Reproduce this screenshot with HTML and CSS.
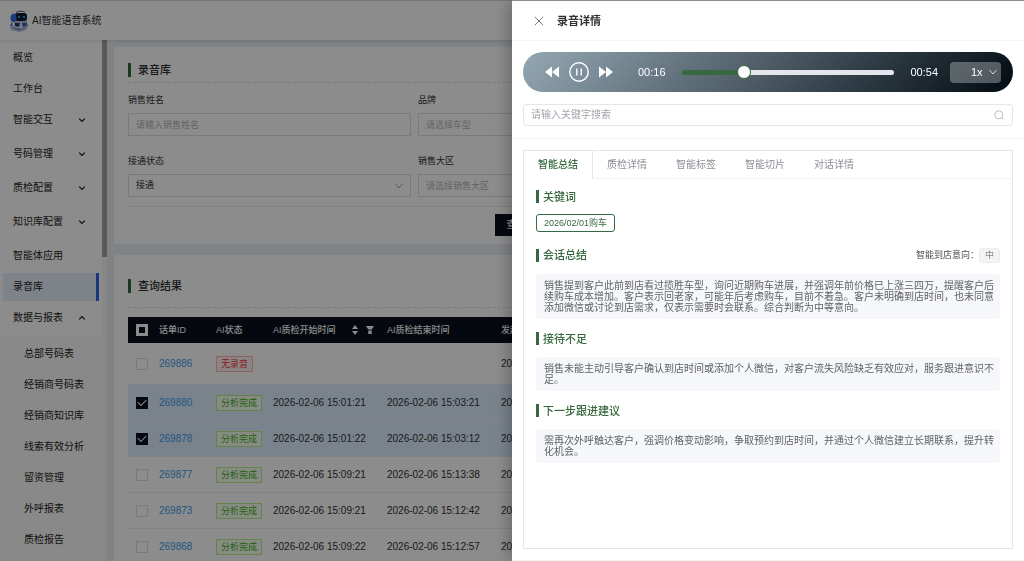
FILE: index.html
```html
<!DOCTYPE html>
<html lang="zh-CN">
<head>
<meta charset="utf-8">
<meta name="viewport" content="width=device-width, initial-scale=1">
<title>AI智能语音系统</title>
<link rel="stylesheet" href="styles.css">
</head>
<body>
<svg class="sprite" aria-hidden="true">
  <symbol id="down" viewBox="0 0 8 8"><path d="M1.2 2.6 4 5.4 6.8 2.6" fill="none" stroke="currentColor" stroke-width="1.3"/></symbol>
  <symbol id="up" viewBox="0 0 8 8"><path d="M1.2 5.4 4 2.6 6.8 5.4" fill="none" stroke="currentColor" stroke-width="1.3"/></symbol>
  <symbol id="thin-down" viewBox="0 0 10 10"><path d="M1.5 3 5 7 8.5 3" fill="none" stroke="currentColor" stroke-width="1"/></symbol>
</svg>
<div class="app">
  <header class="topbar">
    <svg class="logo" viewBox="0 0 20 22" aria-hidden="true">
      <path d="M1 16 10 13l9 3-2 4-7 2-8-2z" fill="#b9c2da"/>
      <path d="M3 17.5 10 15.5l7 2-7 3z" fill="#6d7ba8"/>
      <path d="M5 11h10l2 6-6 2-7-2z" fill="#cfd8ee"/>
      <path d="M6 12h5l-1 5-4-1z" fill="#26365e"/>
      <path d="M13 12h3l1 4-3 1z" fill="#3a4f8a"/>
      <rect x="2" y="3" width="16" height="10" rx="4" fill="#b7c4e2"/>
      <rect x="6" y="3" width="12" height="8" rx="3" fill="#101a30"/>
      <ellipse cx="4.500" cy="8" rx="3" ry="4" fill="#2f6fe0"/>
      <path d="M9 7h2M14 7h2" stroke="#5ac8ff" stroke-width="1.4"/>
      <path d="M7 2.5 11 1l5 1" stroke="#4b5876" fill="none"/>
      <path d="M17 12l1 4M3 13l-1 3" stroke="#3563c4" stroke-width="1.5"/>
    </svg>
    <span class="brand">AI智能语音系统</span>
  </header>
  <div class="shell">
    <nav class="sidebar" aria-label="主菜单">
      <div class="menu">
        <a class="item" href="#">概览</a>
        <a class="item" href="#">工作台</a>
        <a class="item parent" href="#">智能交互<svg class="caret"><use href="#down"/></svg></a>
        <a class="item parent" href="#">号码管理<svg class="caret"><use href="#down"/></svg></a>
        <a class="item parent" href="#">质检配置<svg class="caret"><use href="#down"/></svg></a>
        <a class="item parent" href="#">知识库配置<svg class="caret"><use href="#down"/></svg></a>
        <a class="item" href="#">智能体应用</a>
        <a class="item current" href="#" aria-current="page">录音库</a>
        <a class="item parent open" href="#">数据与报表<svg class="caret"><use href="#up"/></svg></a>
        <div class="submenu">
          <a class="item" href="#">总部号码表</a>
          <a class="item" href="#">经销商号码表</a>
          <a class="item" href="#">经销商知识库</a>
          <a class="item" href="#">线索有效分析</a>
          <a class="item" href="#">留资管理</a>
          <a class="item" href="#">外呼报表</a>
          <a class="item" href="#">质检报告</a>
        </div>
      </div>
      <div class="scrollbar"><div class="thumb"></div></div>
    </nav>
    <main class="content">
      <section class="card filter-card">
        <h2 class="card-title">录音库</h2>
        <form class="filters">
          <div class="field"><label for="f1">销售姓名</label><input class="control" id="f1" type="text" placeholder="请输入销售姓名"></div>
          <div class="field"><label for="f2">品牌</label><input class="control" id="f2" type="text" placeholder="请选择车型"></div>
          <div class="field"></div>
          <div class="field"><label for="f3">接通状态</label>
            <div class="picker"><select class="control" id="f3"><option>接通</option></select><svg class="picker-icon"><use href="#thin-down"/></svg></div></div>
          <div class="field"><label for="f4">销售大区</label><input class="control" id="f4" type="text" placeholder="请选择销售大区"></div>
        </form>
        <div class="actions"><button class="primary" type="button">查询</button></div>
      </section>
      <section class="card result-card">
        <h2 class="card-title">查询结果</h2>
        <table class="records">
          <colgroup><col class="c-check"><col class="c-id"><col class="c-id"><col class="c-date"><col class="c-date"><col></colgroup>
          <thead><tr>
            <th><input class="check partial" type="checkbox" aria-label="全选"></th>
            <th>话单ID</th><th>AI状态</th>
            <th><div class="head-tools"><span>AI质检开始时间</span>
              <svg class="sort" viewBox="0 0 6 10"><path d="M0 4 3 0l3 4zM0 6h6L3 10z" fill="currentColor"/></svg>
              <svg class="funnel" viewBox="0 0 8 8"><path d="M0 0h8L5.7 3.6H2.3zM2.3 4.6h3.4V8H2.3z" fill="currentColor"/></svg></div></th>
            <th>AI质检结束时间</th><th>发起</th>
          </tr></thead>
          <tbody>
            <tr class="first"><td><input class="check" type="checkbox" aria-label="选择269886"></td><td><a href="#">269886</a></td><td><span class="tag bad">无录音</span></td><td></td><td></td><td>2026</td></tr>
            <tr class="picked"><td><input class="check" type="checkbox" checked aria-label="选择269880"></td><td><a href="#">269880</a></td><td><span class="tag good">分析完成</span></td><td>2026-02-06 15:01:21</td><td>2026-02-06 15:03:21</td><td>2026</td></tr>
            <tr class="picked"><td><input class="check" type="checkbox" checked aria-label="选择269878"></td><td><a href="#">269878</a></td><td><span class="tag good">分析完成</span></td><td>2026-02-06 15:01:22</td><td>2026-02-06 15:03:12</td><td>2026</td></tr>
            <tr><td><input class="check" type="checkbox" aria-label="选择269877"></td><td><a href="#">269877</a></td><td><span class="tag good">分析完成</span></td><td>2026-02-06 15:09:21</td><td>2026-02-06 15:13:38</td><td>2026</td></tr>
            <tr><td><input class="check" type="checkbox" aria-label="选择269873"></td><td><a href="#">269873</a></td><td><span class="tag good">分析完成</span></td><td>2026-02-06 15:09:21</td><td>2026-02-06 15:12:42</td><td>2026</td></tr>
            <tr><td><input class="check" type="checkbox" aria-label="选择269868"></td><td><a href="#">269868</a></td><td><span class="tag good">分析完成</span></td><td>2026-02-06 15:09:22</td><td>2026-02-06 15:12:57</td><td>2026</td></tr>
          </tbody>
        </table>
      </section>
    </main>
  </div>
</div>
<div class="mask"></div>
<aside class="drawer" role="dialog" aria-labelledby="drawer-title">
  <header class="drawer-head">
    <button class="close" type="button" aria-label="关闭"><svg viewBox="0 0 10 10"><path d="M.8.8l8.4 8.4M9.2.8.8 9.2" fill="none" stroke="currentColor" stroke-width="1"/></svg></button>
    <h2 id="drawer-title">录音详情</h2>
  </header>
  <div class="drawer-top">
    <div class="player">
      <div class="transport">
        <button type="button" aria-label="后退"><svg class="skip" viewBox="0 0 14 12"><path d="M7 .5v11L0 6zM14 .5v11L7 6z" fill="currentColor"/></svg></button>
        <button type="button" aria-label="暂停"><svg class="pause" viewBox="0 0 20 20"><circle cx="10" cy="10" r="9.2" fill="none" stroke="currentColor" stroke-width="1.4"/><path d="M7.8 6.5v7M12.2 6.5v7" stroke="currentColor" stroke-width="1.4"/></svg></button>
        <button type="button" aria-label="前进"><svg class="skip" viewBox="0 0 14 12"><path d="M0 .5v11L7 6zM7 .5v11L14 6z" fill="currentColor"/></svg></button>
      </div>
      <span class="time">00:16</span>
      <input class="seek" type="range" min="0" max="54" value="15" aria-label="播放进度">
      <span class="time">00:54</span>
      <div class="speed"><select aria-label="播放速度"><option>1x</option></select><svg class="speed-icon"><use href="#thin-down"/></svg></div>
    </div>
    <div class="search">
      <input type="text" placeholder="请输入关键字搜索" aria-label="关键字搜索">
      <svg class="search-icon" viewBox="0 0 10 10"><circle cx="4.800" cy="4.800" r="4" fill="none" stroke="currentColor" stroke-width=".9"/><path d="M7.600 7.600 9.400 9.400" stroke="currentColor" stroke-width=".9"/></svg>
    </div>
  </div>
  <div class="drawer-body">
    <div class="tabs-card">
      <div class="tabs" role="tablist">
        <button class="tab active" role="tab" aria-selected="true" type="button">智能总结</button>
        <button class="tab" role="tab" type="button">质检详情</button>
        <button class="tab" role="tab" type="button">智能标签</button>
        <button class="tab" role="tab" type="button">智能切片</button>
        <button class="tab" role="tab" type="button">对话详情</button>
      </div>
      <div class="panel" role="tabpanel">
        <section class="block keywords"><h3>关键词</h3><span class="keyword">2026/02/01购车</span></section>
        <section class="block">
          <div class="block-head"><h3>会话总结</h3><div class="intent"><span>智能到店意向：</span><span class="level">中</span></div></div>
          <p>销售提到客户此前到店看过揽胜车型，询问近期购车进展，并强调年前价格已上涨三四万，提醒客户后续购车成本增加。客户表示回老家，可能年后考虑购车，目前不着急。客户未明确到店时间，也未同意添加微信或讨论到店需求，仅表示需要时会联系。综合判断为中等意向。</p>
        </section>
        <section class="block"><h3>接待不足</h3><p>销售未能主动引导客户确认到店时间或添加个人微信，对客户流失风险缺乏有效应对，服务跟进意识不足。</p></section>
        <section class="block"><h3>下一步跟进建议</h3><p>需再次外呼触达客户，强调价格变动影响，争取预约到店时间，并通过个人微信建立长期联系，提升转化机会。</p></section>
      </div>
    </div>
  </div>
</aside>
</body>
</html>
```
FILE: styles.css
```css
* { box-sizing: border-box; }
html, body { height: 100%; }
body {
  margin: 0;
  overflow: hidden;
  font: 10px/12px "Liberation Sans", "Noto Sans CJK SC", sans-serif;
  color: #303133;
}
h2, h3, p { margin: 0; }
a { color: inherit; text-decoration: none; }
button, input, select { font: inherit; color: inherit; margin: 0; }
button { border: 0; padding: 0; background: none; }
svg { display: block; flex: none; }
.sprite { position: absolute; width: 0; height: 0; }

.app { display: flex; flex-direction: column; height: 100vh; border-top: 1px solid #dcdcdc; background: #eaeef4; isolation: isolate; }
.topbar {
  display: flex; align-items: center; gap: 3px; flex: none;
  height: 39px; padding-left: 9px; background: #fff;
  box-shadow: 0 1px 4px rgba(0, 21, 41, .14); z-index: 1;
}
.logo { width: 20px; height: 22px; }
.brand { color: #303133; }
.shell { display: flex; flex: 1; min-height: 0; }

.sidebar { display: flex; flex: none; width: 107px; background: #fff; overflow: hidden; }
.menu { flex: 1; padding-top: 4px; }
.item { display: flex; align-items: center; justify-content: space-between; height: 28px; margin: 0 3px 3px; padding: 0 13px 0 10px; color: #1d1e20; white-space: nowrap; }
.parent { margin-bottom: 6px; }
.open { margin-bottom: 4px; }
.caret { width: 8px; height: 8px; }
.current { background: #e6effc; border-right: 3px solid #2f66e0; }
.submenu { padding: 4px 0 30px; background: #fafafa; }
.submenu .item { padding-left: 21px; padding-right: 0; }
.scrollbar { width: 5px; background: #f7f7f7; }
.thumb { height: 217px; background: #a2a2a2; }

.content { flex: 1; min-width: 0; padding: 7px 19px 0 7px; overflow: hidden; }
.card { background: #fff; border-radius: 4px; padding: 16px 14px 8px; }
.card + .card { margin-top: 11px; }
.card-title { display: flex; align-items: center; gap: 7px; padding-bottom: 5px; border-bottom: 1px dashed #e2e2e2; font-size: 11px; line-height: 14px; font-weight: 500; }
.card-title::before { content: ""; width: 3px; height: 14px; background: #2d6a3a; }
.filters { display: grid; grid-template-columns: repeat(3, 1fr); gap: 20px 7px; padding: 12px 0 9px; }
.field { display: flex; flex-direction: column; gap: 7px; font-size: 9px; line-height: 11px; }
.control { width: 100%; height: 23px; padding: 0 7px; border: 1px solid #dcdfe6; border-radius: 0; background: #fff; outline: 0; appearance: none; }
.control::placeholder { color: #b4b7bd; opacity: 1; }
.picker { display: grid; align-items: center; }
.picker > * { grid-area: 1 / 1; }
.picker-icon { justify-self: end; width: 10px; height: 10px; margin-right: 7px; color: #a0a3a9; pointer-events: none; }
.actions { display: flex; justify-content: center; padding: 7px 70px 0 0; border-top: 1px solid #ebebeb; }
.primary { height: 22px; padding: 0 11px; min-width: 60px; text-align: left; border: 1px solid #0a121d; background: #0a121d; color: #fff; font-weight: 500; }
.result-card { height: 400px; padding-top: 24px; }
.result-card .card-title { padding-bottom: 14px; margin-bottom: 9px; }

.records { width: 100%; table-layout: fixed; border-collapse: separate; border-spacing: 0; }
.c-check { width: 25px; }
.c-id { width: 57px; }
.c-date { width: 114px; }
.records th { height: 26px; padding: 0 6px; background: #0a121d; color: #fff; font-size: 9px; font-weight: 500; text-align: left; white-space: nowrap; }
.records td { height: 36px; padding: 0 6px; border-bottom: 1px solid #ebeef5; white-space: nowrap; }
.records .first td { height: 42px; }
.records th:first-child, .records td:first-child { padding: 0 0 0 8px; }
.records a { color: #3a9cec; }
.picked td { background: #dfefff; }
.head-tools { display: flex; align-items: center; gap: 8px; }
.head-tools span { margin-right: 8px; }
.sort { width: 6px; height: 10px; }
.funnel { width: 8px; height: 8px; }
.check { display: grid; place-items: center; appearance: none; width: 12px; height: 12px; border: 1px solid #dcdfe6; background: #fff; }
.check:checked { border-color: #0a121d; background: #0a121d; }
.check:checked::before { content: ""; width: 7px; height: 4px; margin-bottom: 2px; border: solid #fff; border-width: 0 0 1px 1px; transform: rotate(-45deg); }
.partial { background: #0a121d; border: 3px solid #fff; }
.tag { display: inline-block; padding: 0 4px; border: 1px solid; font-size: 9px; line-height: 14px; }
.good { color: #42b01f; border-color: #b7eb8f; background: #f6ffed; }
.bad { color: #f5323c; border-color: #ffb3ae; background: #fff1f0; }

.mask { position: fixed; inset: 0; background: rgba(0, 0, 0, .45); }

.drawer { position: fixed; inset: 1px 0 0 auto; width: 50%; display: flex; flex-direction: column; background: #fff; border-bottom: 1px solid #f0f0f0; box-shadow: 0 -1px 0 #8c8c8c, -4px 0 14px rgba(0, 0, 0, .25); }
.drawer-head { display: flex; align-items: center; gap: 13px; height: 40px; flex: none; padding-left: 22px; border-bottom: 1px solid #f4f4f5; }
.drawer-head h2 { font-size: 11px; line-height: 14px; font-weight: 700; color: #303133; }
.close { color: #77797d; }
.close svg { width: 10px; height: 10px; }
.drawer-top { display: flex; flex-direction: column; gap: 12px; padding: 11px 11px 12px; border-bottom: 1px solid #f2f2f4; }
.player { display: flex; align-items: center; height: 40px; padding: 0 12px 0 22px; gap: 16px; border-radius: 20px; color: #fff; background: linear-gradient(135deg, #94a8b4, #010a11); }
.transport { display: flex; align-items: center; gap: 10px; margin-right: 9px; }
.transport button { color: #fff; }
.skip { width: 14px; height: 12px; }
.pause { width: 20px; height: 20px; }
.time { font-size: 11px; }
.seek { flex: 1; min-width: 0; height: 14px; appearance: none; background: none; }
.seek::-webkit-slider-runnable-track { height: 5px; border-radius: 3px; background: linear-gradient(to right, #37683f 30%, #e4e5ed 30%); }
.seek::-webkit-slider-thumb { appearance: none; width: 14px; height: 14px; margin-top: -5px; border: 1px solid #37683f; border-radius: 50%; background: #fff; }
.speed { display: grid; align-items: center; width: 51px; height: 21px; margin-left: -4px; border-radius: 4px; background: rgba(255, 255, 255, .3); }
.speed > * { grid-area: 1 / 1; }
.speed select { width: 100%; height: 21px; padding: 0 0 0 21px; border: 0; background: none; appearance: none; font-size: 11px; color: #fff; }
.speed-icon { justify-self: end; width: 10px; height: 10px; margin-right: 3px; pointer-events: none; color: #d5d8da; }
.search { display: flex; align-items: center; height: 22px; padding: 0 8px 0 7px; border: 1px solid #e4e6ec; border-radius: 3px; }
.search input { flex: 1; min-width: 0; padding: 0; border: 0; outline: 0; background: none; }
.search input::placeholder { color: #a2a4aa; opacity: 1; }
.search-icon { width: 10px; height: 10px; color: #b0b3b9; }

.drawer-body { flex: 1; min-height: 0; display: flex; flex-direction: column; padding: 11px; }
.tabs-card { flex: 1; border: 1px solid #e4e6ec; }
.tabs { display: flex; height: 28px; border-bottom: 1px solid #f2f3f6; }
.tab { height: 28px; padding: 0 14px; border-right: 1px solid transparent; color: #8b8e94; }
.tab.active { color: #37683f; font-weight: 500; border-right-color: #e4e6ec; background: #fff; }
.panel { display: flex; flex-direction: column; gap: 13px; padding: 11px 12px; }
.block { display: flex; flex-direction: column; gap: 12px; }
.block h3 { display: flex; align-items: center; gap: 4px; height: 13px; font-size: 11px; font-weight: 500; color: #37683f; }
.block h3::before { content: ""; width: 3px; height: 13px; background: #37683f; }
.keywords { gap: 11px; margin-bottom: 3px; }
.keyword { align-self: flex-start; padding: 0 7px; border: 1px solid #37683f; border-radius: 3px; font-size: 9px; line-height: 16px; color: #37683f; }
.block-head { display: flex; align-items: center; justify-content: space-between; height: 14px; }
.intent { display: flex; align-items: center; font-size: 9px; color: #4a4c50; }
.level { padding: 0 5px; border: 1px solid #ececee; border-radius: 3px; background: #f4f4f5; color: #85878c; line-height: 13px; }
.block p { padding: 6px 6px 6px 8px; border-radius: 4px; background: #f6f7fa; color: #606266; line-height: 11px; }
```
